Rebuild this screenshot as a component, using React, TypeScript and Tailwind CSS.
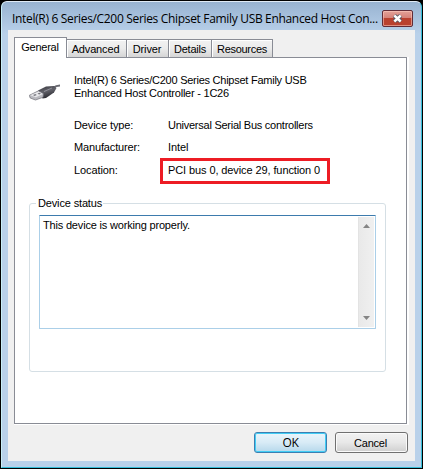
import React from "react";

const tabs = [
  { label: "Advanced", cls: "w-[60px] pr-[2px] tracking-[-0.15px]" },
  { label: "Driver", cls: "w-[42px] pr-[1px] tracking-[-0.15px]" },
  { label: "Details", cls: "w-[43px] tracking-[-0.25px]" },
  { label: "Resources", cls: "w-[61px] tracking-[-0.3px]" },
];

function UsbPlug() {
  return (
    <svg width="34" height="20" viewBox="0 0 34 20" className="block">
      <defs>
        <linearGradient id="body" x1="0" y1="0" x2="0.4" y2="1">
          <stop offset="0" stopColor="#34343a" />
          <stop offset="0.5" stopColor="#62626a" />
          <stop offset="1" stopColor="#29292f" />
        </linearGradient>
      </defs>
      <path d="M24 5 Q27 2.5 31 2.5" fill="none" stroke="#6a6a72" strokeWidth="1.8" />
      <path d="M9 7.5 L17 3.5 L25 3 L27.5 5 L25 9.5 L17 15 L13.5 15.5 Z" fill="url(#body)" />
      <path d="M0.3 12.3 L9.5 7.8 L14.5 10.8 L14 14.3 L6.5 17 L1.2 15 Z" fill="#b9b9bf" stroke="#707078" strokeWidth="0.7" />
      <path d="M1.2 12.3 L9.5 8.5 L14 11 L6.8 14.2 Z" fill="#e8e8eb" />
      <path d="M4 12.1 L6.3 11.1 L7.8 12 L5.5 13 Z M8.5 10.5 L10.5 9.8 L12 10.8 L10 11.5 Z" fill="#77777e" />
      <path d="M15 8.5 L23 5" stroke="#92929b" strokeWidth="1" />
    </svg>
  );
}

export default function App() {
  return (
    <div className="h-[469px] w-[423px] bg-black font-['Liberation_Sans',Arial,sans-serif] text-[11px] leading-[13px] text-black">
      <div className="flex h-[469px] w-[423px] flex-col whitespace-nowrap px-px pb-px pt-px">
        <div className="flex h-[467px] w-[421px] flex-col rounded-t-[6px] border border-[#35bdd8] border-t-[#dfeaf5] border-l-[#c9eff8] bg-[#b9d1ea] bg-linear-to-b from-[#98b3d1] from-0% to-[#b9d1ea] to-[32px] pl-[6px] pr-[6px]">
          <div className="flex h-[28px] shrink-0 items-start justify-between pl-[4px] pr-[2px]">
            <span className="mt-[8px] font-['Open_Sans','Noto_Sans',sans-serif] text-[12px] leading-[18px] tracking-[-0.325px]">
              Intel(R) 6 Series/C200 Series Chipset Family USB Enhanced Host Con...
            </span>
            <button aria-label="Close" className="mt-[8px] flex h-[17px] w-[31px] shrink-0 items-center justify-center rounded-[2px] border border-[#612c38] bg-linear-to-b from-[#e3a198] from-0% via-[#d6837a] via-45% to-[#d2755f] shadow-[inset_0_0_0_1px_rgba(255,205,195,0.55),inset_0_-8px_0_#b9412f]">
              <svg width="13" height="11" viewBox="0 0 13 11">
                <path d="M3.3 2.5 L9.7 8.5 M9.7 2.5 L3.3 8.5" stroke="#545765" strokeWidth="4.4" />
                <path d="M3.3 2.5 L9.7 8.5 M9.7 2.5 L3.3 8.5" stroke="#fff" strokeWidth="2.4" />
              </svg>
            </button>
          </div>

          <div className="flex h-[431px] w-[407px] flex-col bg-[#f0f0f0] pl-[6px] pt-[7px]">
            <div className="flex h-[20px] items-end">
              <div className="z-10 -mb-px flex h-[21px] w-[53px] justify-center border border-b-0 border-[#898c95] bg-white pt-[3px] pr-[1px] tracking-[-0.25px]">General</div>
              {tabs.map((t) => (
                <div key={t.label} className={`flex h-[18px] justify-center border border-b-0 border-l-0 border-[#898c95] bg-linear-to-b from-[#f2f2f2] via-[#ebebeb] via-50% to-[#d5d5d5] pt-[3px] shadow-[inset_1px_1px_0_#fff] ${t.cls}`}>
                  {t.label}
                </div>
              ))}
            </div>

            <div className="h-[368px] w-[395px] bg-white">
              <div className="flex h-[367px] w-[393px] flex-col border border-[#898c95] bg-white pl-[14px]">
                <div className="flex h-[45px] pt-[16px]">
                  <div className="w-[45px] pt-[9px]"><UsbPlug /></div>
                  <div>
                    <div className="tracking-[-0.25px]">Intel(R) 6 Series/C200 Series Chipset Family USB</div>
                    <div className="tracking-[-0.23px]">Enhanced Host Controller - 1C26</div>
                  </div>
                </div>
                <div className="mt-[9px] flex flex-col pl-[45px]">
                  <div className="flex h-[22px] items-center pt-[13px] pb-[9px]">
                    <span className="w-[94px] tracking-[-0.1px]">Device type:</span>
                    <span className="tracking-[-0.25px]">Universal Serial Bus controllers</span>
                  </div>
                  <div className="flex h-[22px] items-center pt-[13px] pb-[9px]">
                    <span className="w-[94px] tracking-[-0.15px]">Manufacturer:</span>
                    <span className="tracking-[-0.1px]">Intel</span>
                  </div>
                  <div className="flex h-[27px] items-start">
                    <span className="mt-[8px] w-[86px] tracking-[-0.1px]">Location:</span>
                    <span className="mt-[2px] h-[26px] w-[170px] border-[3px] border-[#ed1c24] pl-[5px] pt-[3px] tracking-[-0.1px]">PCI bus 0, device 29, function 0</span>
                  </div>
                </div>

                <fieldset className="mt-[20px] h-[169px] w-[357px] shrink-0">
                  <div className="flex h-[169px] flex-col rounded-[3px] border border-[#d5dfe5] pl-[9px]">
                    <div className="-mt-[7px] ml-[-3px] h-[13px] w-[67px] bg-white pl-[2px] tracking-[-0.15px]">Device status</div>
                    <div className="mt-[5px] flex h-[114px] w-[337px] justify-between rounded-[1px] border border-[#abcfe8] border-t-[#3d7bad] pr-px pt-px">
                      <span className="pl-[3px] pt-[2px] tracking-[-0.18px]">This device is working properly.</span>
                      <div className="flex h-[110px] w-[16px] flex-col items-center justify-between border-l border-[#e3e3e3] bg-linear-to-r from-[#e9e9e9] to-[#f0f0f0] pb-[7px] pt-[7px]">
                        <svg width="7" height="4" viewBox="0 0 7 4"><path d="M3.5 0 L7 4 H0 Z" fill="#858585" /></svg>
                        <svg width="7" height="4" viewBox="0 0 7 4"><path d="M0 0 H7 L3.5 4 Z" fill="#858585" /></svg>
                      </div>
                    </div>
                  </div>
                </fieldset>
              </div>
            </div>

            <div className="mt-[7px] flex gap-[8px] pl-[240px]">
              <button className="h-[21px] w-[73px] rounded-[3px] border border-[#3c7fb1] bg-linear-to-b from-[#eaf5fb] via-[#d8ebf6] via-50% to-[#b6d8eb] font-['Open_Sans',sans-serif] text-[12px] leading-[18px] tracking-[-0.4px] shadow-[inset_0_0_0_1px_#42cdf5]">OK</button>
              <button className="h-[21px] w-[73px] rounded-[3px] border border-[#707070] bg-linear-to-b from-[#f2f2f2] via-[#e8e8e8] via-50% to-[#cfcfcf] pr-[2px] leading-[18px] tracking-[-0.2px] shadow-[inset_0_0_0_1px_#fafafa]">Cancel</button>
            </div>
          </div>
        </div>
      </div>
    </div>
  );
}
